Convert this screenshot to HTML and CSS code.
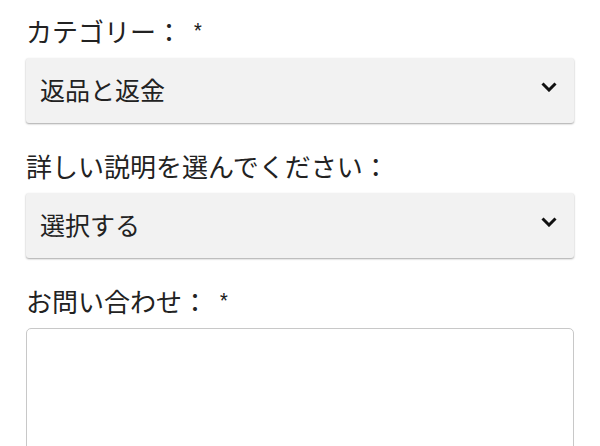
FILE: index.html
```html
<!DOCTYPE html>
<html lang="ja">
  <head>
    <meta charset="UTF-8" />
    <meta name="viewport" content="width=device-width, initial-scale=1.0" />
    <title>お問い合わせ</title>
    <link rel="stylesheet" href="styles.css">
  </head>
  <body>
    <form class="contact-form">
      <label class="field-label" for="category">カテゴリー：<span class="req">*</span></label>
      <div class="select-wrap">
        <select id="category" class="select-box">
          <option>返品と返金</option>
        </select>
        <svg class="chevron" width="16" height="10" viewBox="0 0 16 10">
          <path d="M1.5 1.5 L8 8 L14.5 1.5" fill="none" stroke="#111" stroke-width="3" />
        </svg>
      </div>

      <label class="field-label" for="detail">詳しい説明を選んでください：</label>
      <div class="select-wrap">
        <select id="detail" class="select-box">
          <option>選択する</option>
        </select>
        <svg class="chevron" width="16" height="10" viewBox="0 0 16 10">
          <path d="M1.5 1.5 L8 8 L14.5 1.5" fill="none" stroke="#111" stroke-width="3" />
        </svg>
      </div>

      <label class="field-label" for="message">お問い合わせ：<span class="req">*</span></label>
      <textarea id="message" class="text-box"></textarea>
    </form>
  </body>
</html>
```

FILE: styles.css
```css
* {
  margin: 0px;
  padding: 0px;
  box-sizing: border-box;
}
body {
  background: #fff;
  color: #222;
  font-family: "Noto Sans CJK JP", sans-serif;
  font-size: 25px;
}
.contact-form {
  padding: 14px 26px 0px;
}
.field-label {
  display: block;
  height: 34px;
  font-size: 26px;
  line-height: 34px;
  margin-bottom: 10px;
}
.req {
  display: inline-block;
  font-family: Roboto, sans-serif;
  font-size: 18px;
  line-height: 1;
  margin-left: 12px;
  vertical-align: 6px;
}
.select-wrap {
  position: relative;
  margin-bottom: 26px;
}
.select-box {
  display: block;
  width: 100%;
  height: 65px;
  padding: 0px 50px 4px 14px;
  border: none;
  border-radius: 3px;
  background-color: #f2f2f2;
  box-shadow: 0 1px 2px rgba(0, 0, 0, 0.35);
  font-family: inherit;
  font-size: 25px;
  color: #222;
  appearance: none;
  -webkit-appearance: none;
}
.chevron {
  position: absolute;
  right: 17px;
  top: 24px;
  pointer-events: none;
}
.text-box {
  display: block;
  width: 100%;
  height: 160px;
  border: 1px solid #c8c8c8;
  border-radius: 5px;
  resize: none;
  font-family: inherit;
  font-size: 25px;
}
```
